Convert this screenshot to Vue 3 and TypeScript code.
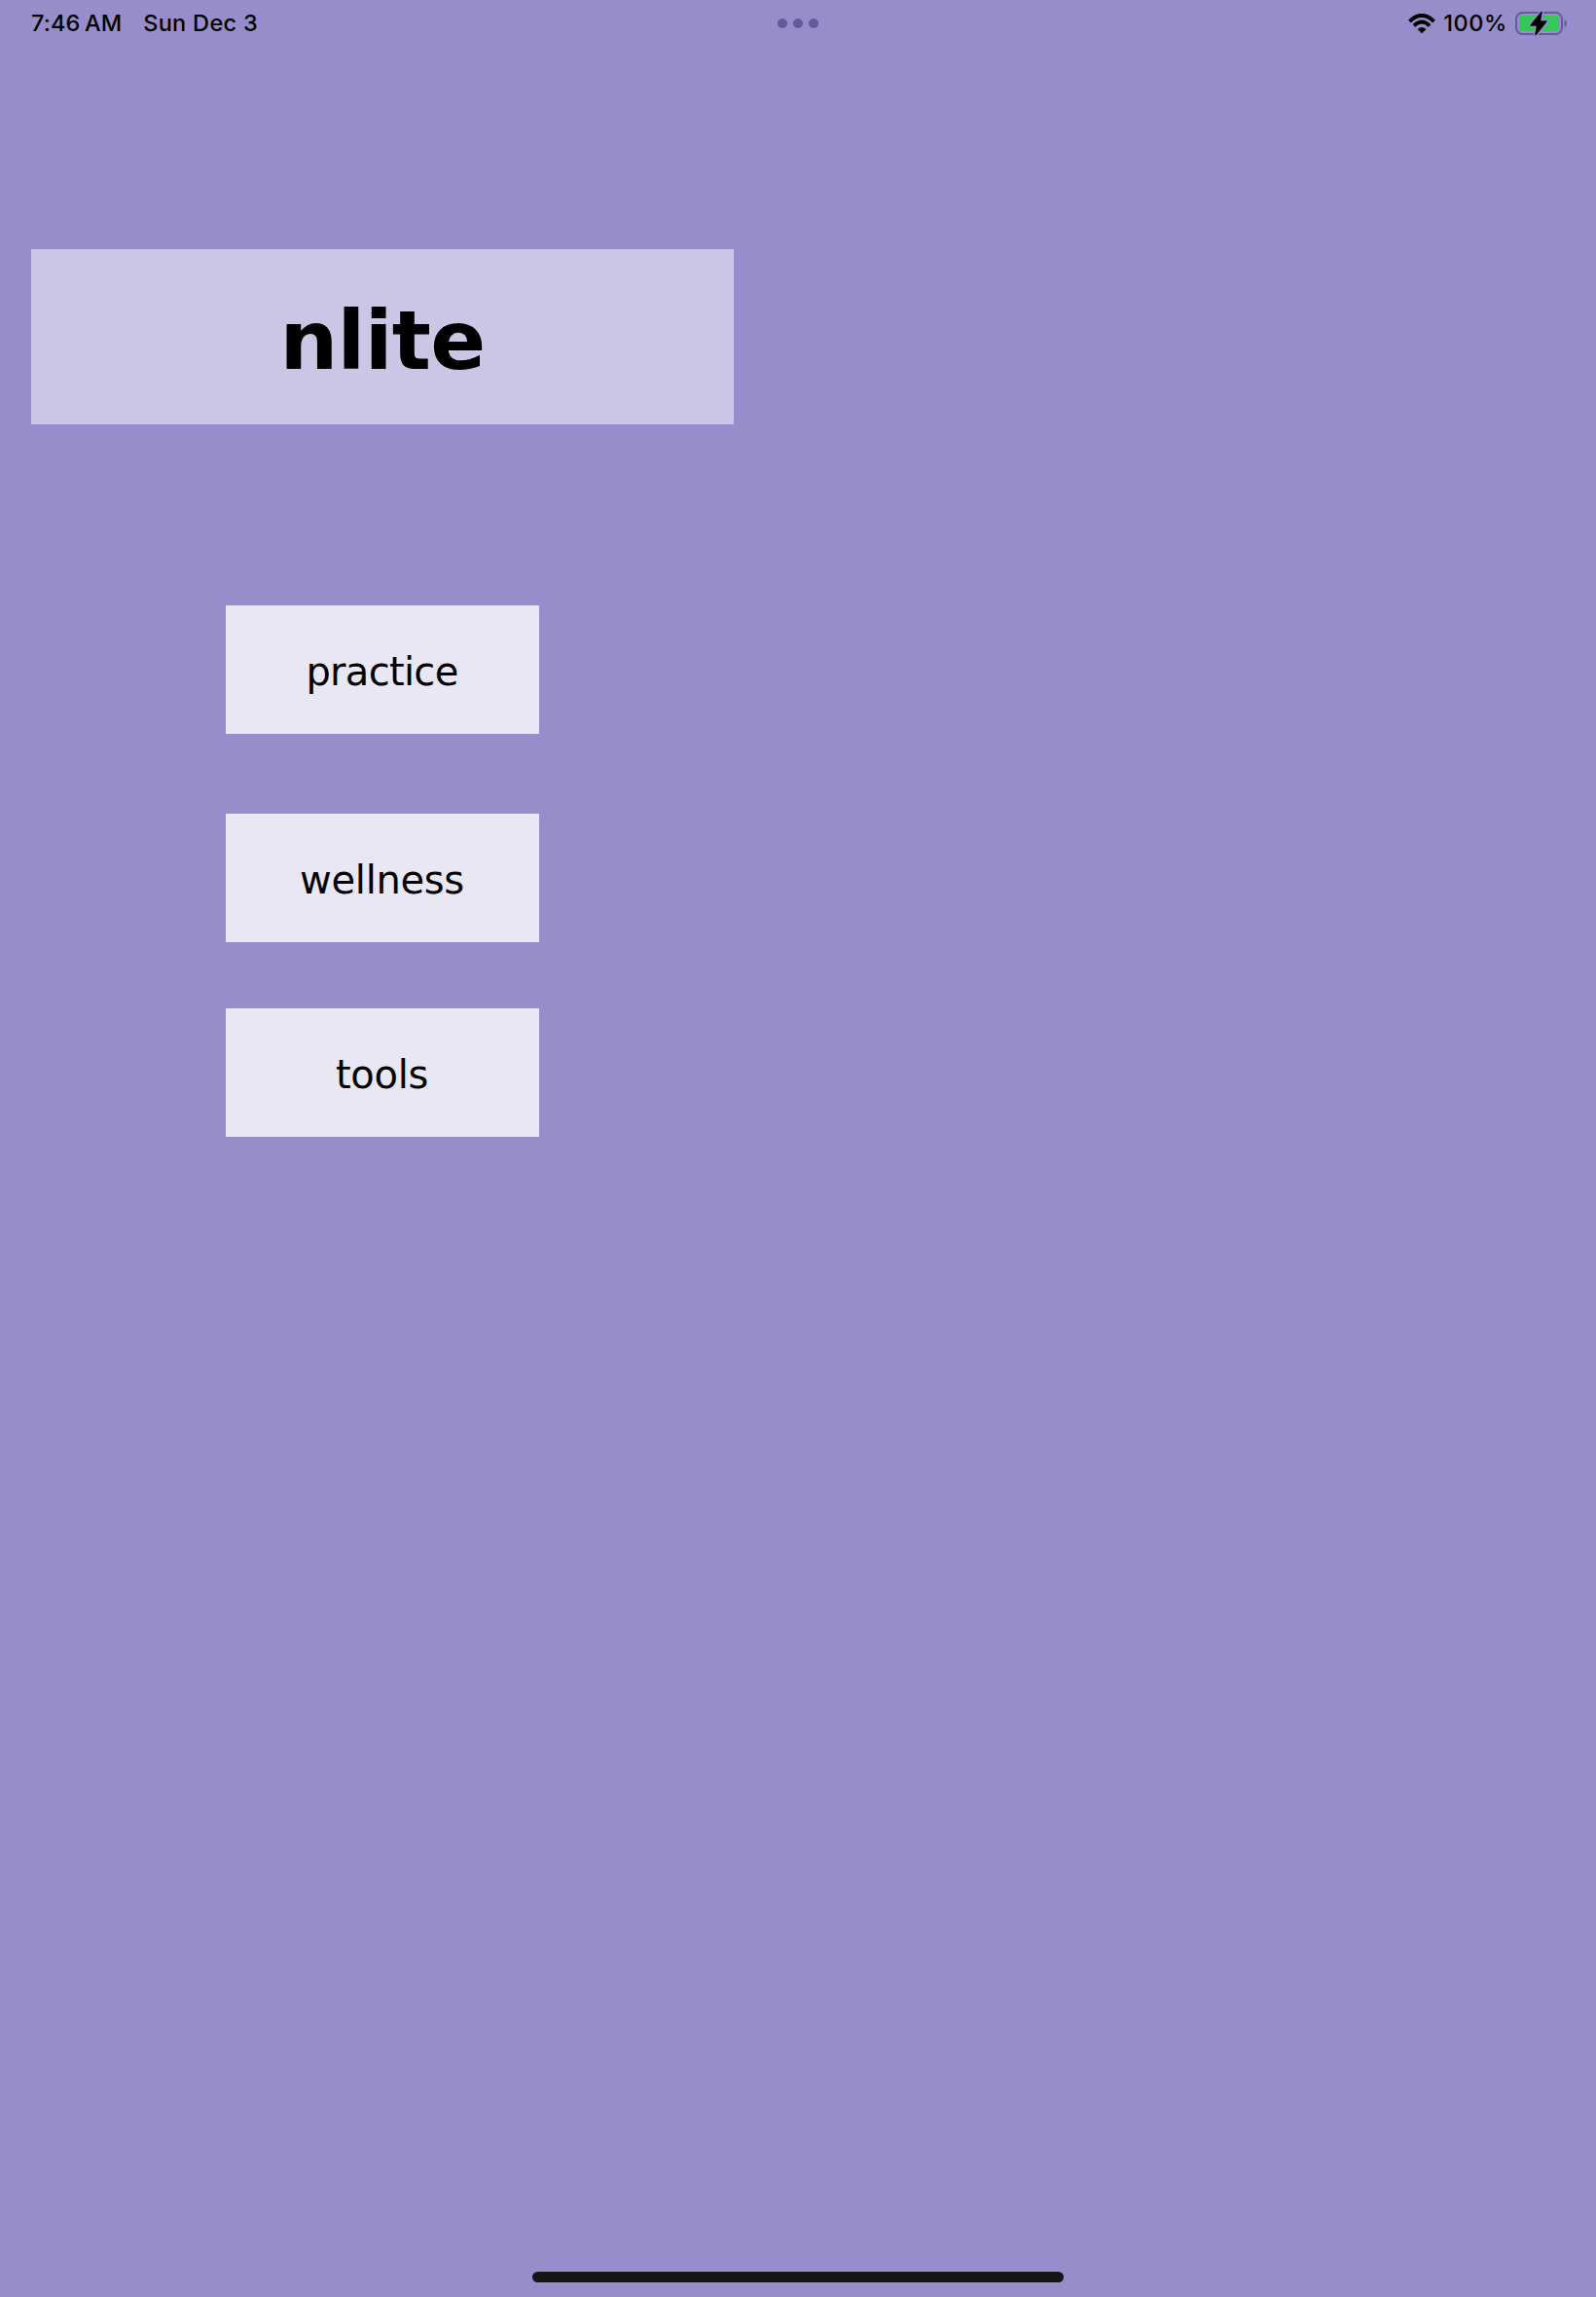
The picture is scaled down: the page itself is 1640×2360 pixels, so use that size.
<script setup lang="ts">
const actions: string[] = ['practice', 'wellness', 'tools']
</script>

<template>
  <div class="screen">
    <header class="status">
      <div class="left">
        <span class="time">7:46<span class="meridiem">AM</span></span>
        <span class="date">Sun Dec 3</span>
      </div>
      <div class="dots"><i></i><i></i><i></i></div>
      <div class="right">
        <svg class="wifi" width="28" height="21" viewBox="0 0 28 21">
          <path d="M1.5 8 Q14 -4.2 26.5 8" fill="none" stroke="#000" stroke-width="3.9" />
          <path d="M6 12.5 Q14 4.7 22 12.5" fill="none" stroke="#000" stroke-width="3.8" />
          <path d="M9.6 16 Q14 11.8 18.4 16 L14.7 19.7 Q14 20.3 13.3 19.7 Z" fill="#000" />
        </svg>
        <span class="percent">100%</span>
        <svg class="battery" width="54" height="26" viewBox="0 0 54 26">
          <rect x="1" y="2" width="47" height="22" rx="6.5" fill="none" stroke="#655a96" stroke-width="2" />
          <rect x="4" y="5" width="41" height="16" rx="3.6" fill="#34c759" />
          <path d="M50.5 9 Q53 10 53 13 Q53 16 50.5 17 Z" fill="#655a96" />
          <path d="M27 1.5 L16.2 14.9 H22.8 L21 24.5 L31.8 11 H25.2 Z" fill="#000" stroke="#978dcb" stroke-width="4.4" stroke-linejoin="round" />
          <path d="M27 1.5 L16.2 14.9 H22.8 L21 24.5 L31.8 11 H25.2 Z" fill="#000" stroke="#000" stroke-width="1.6" stroke-linejoin="round" />
        </svg>
      </div>
    </header>
    <main class="content">
      <h1 class="title">nlite</h1>
      <nav class="menu">
        <button v-for="name in actions" :key="name" :class="['action', name]">{{ name }}</button>
      </nav>
    </main>
    <div class="home"></div>
  </div>
</template>

<style>
body {
  background: #978dcb;
}
</style>

<style scoped>
.screen {
  box-sizing: border-box;
  width: 1640px;
  height: 2360px;
  background: #978dcb;
  color: #000;
  display: flex;
  flex-direction: column;
}
.status {
  height: 48px;
  padding: 0 29px;
  display: grid;
  grid-template-columns: 1fr auto 1fr;
  align-items: center;
  font: 500 23.5px/48px Inter, sans-serif;
  white-space: nowrap;
}
.left {
  display: flex;
  gap: 22px;
  padding-left: 3px;
}
.time {
  letter-spacing: 0.1px;
}
.date {
  letter-spacing: 0.3px;
}
.meridiem {
  margin-left: 4.5px;
}
.dots {
  display: flex;
  gap: 6px;
}
.dots i {
  width: 10px;
  height: 10px;
  border-radius: 50%;
  background: #65589c;
}
.right {
  display: flex;
  align-items: center;
  justify-content: flex-end;
}
.percent {
  margin: 0 8px 0 8px;
  letter-spacing: 0.6px;
}
.content {
  width: 722px;
  margin: 208px 0 0 32px;
  flex: 1;
}
.title {
  margin: 0;
  height: 180px;
  background: #cbc6e5;
  text-align: center;
  font: bold 84px/188px Verdana, "DejaVu Sans", sans-serif;
  letter-spacing: -0.7px;
}
.menu {
  display: flex;
  flex-direction: column;
  align-items: center;
  padding-top: 186px;
}
.action {
  width: 322px;
  height: 132px;
  padding: 4px 1px 0 0;
  border: 0;
  border-radius: 0;
  background: #e9e7f4;
  color: #000;
  font: 40px/48px Verdana, "DejaVu Sans", sans-serif;
  letter-spacing: -0.3px;
}
.practice {
  letter-spacing: -0.7px;
}
.wellness {
  margin-top: 82px;
}
.tools {
  margin-top: 68px;
}
.home {
  width: 546px;
  height: 11px;
  margin: 0 auto 15px;
  border-radius: 6px;
  background: #161616;
}
</style>
